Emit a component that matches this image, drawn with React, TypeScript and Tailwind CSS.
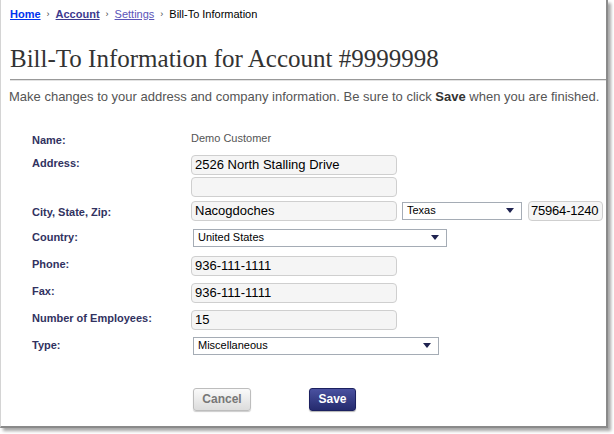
import React from "react";

const labelCls = "w-[159px] shrink-0 text-[11px] font-bold text-[#31325f]";
const fieldCls =
  "h-[20px] rounded-[4px] border border-[#cfcfcf] bg-[#f5f5f5] text-[13px] text-black outline-none";

function Field({ value, width = "w-[206px] px-[3px]" }: { value: string; width?: string }) {
  return <input className={`${fieldCls} ${width}`} defaultValue={value} />;
}

function Caret() {
  return (
    <svg width="8" height="5" viewBox="0 0 8 5" className="shrink-0">
      <path d="M0 0 H8 L4 5 Z" fill="#1f2350" />
    </svg>
  );
}

function FakeSelect({ value, width }: { value: string; width: string }) {
  return (
    <div
      className={`flex h-[18px] ${width} items-center justify-between border border-[#a5acb5] bg-white pl-[4px] pr-[7px] text-[11px] text-black`}
    >
      <span>{value}</span>
      <Caret />
    </div>
  );
}

function Row({ label, children, className = "" }: { label: string; children: React.ReactNode; className?: string }) {
  return (
    <div className={`flex items-start ${className}`}>
      <div className={labelCls}>{label}</div>
      <div className="flex flex-col gap-[2px]">{children}</div>
    </div>
  );
}

export default function App() {
  return (
    <div className="h-[434px] w-[614px] bg-white" style={{ fontFamily: '"Liberation Sans", Arial, sans-serif' }}>
      <div className="h-[428px] w-[608px] border-b-2 border-l border-r-2 border-b-[#8a8a8a] border-l-[#d4d4d4] border-r-[#8a8a8a] bg-white shadow-[3px_3px_3px_rgba(0,0,0,0.35)]">
        {/* breadcrumb */}
        <div className="flex items-center gap-[6px] pl-[9px] pt-[8px] text-[11px] leading-[13px]">
          <a className="font-bold text-[#0033ee] underline">Home</a>
          <span className="text-[9px] text-[#444]">›</span>
          <a className="font-bold text-[#3d3a8e] underline">Account</a>
          <span className="text-[9px] text-[#444]">›</span>
          <a className="text-[#5a54b8] underline">Settings</a>
          <span className="text-[9px] text-[#444]">›</span>
          <span className="text-black">Bill-To Information</span>
        </div>

        <h1
          className="ml-[9px] mt-[22px] text-[25px] leading-[32px] text-[#333]"
          style={{ fontFamily: '"Liberation Serif", "Times New Roman", serif' }}
        >
          Bill-To Information for Account #9999998
        </h1>
        <div className="ml-[9px] mt-[4px] h-[2px] border-t border-[#999] bg-[#e2e2e2]" />

        <p className="ml-[8px] mt-[8px] whitespace-nowrap text-[13px] leading-[15px] text-[#555]">
          Make changes to your address and company information. Be sure to click{" "}
          <b className="text-[#333]">Save</b> when you are finished.
        </p>

        <div className="ml-[31px] mt-[28px] flex flex-col">
          <Row label="Name:">
            <span className="text-[11px] leading-[13px] text-[#555]">Demo Customer</span>
          </Row>

          <Row label="Address:" className="mt-[6px]">
            <Field value="2526 North Stalling Drive" />
            <Field value="" />
          </Row>

          <div className="mt-[4px] flex items-start">
            <div className={`${labelCls} pt-[3px]`}>City, State, Zip:</div>
            <div className="flex items-center">
              <Field value="Nacogdoches" />
              <div className="ml-[5px]">
                <FakeSelect value="Texas" width="w-[120px]" />
              </div>
              <Field value="75964-1240" width="ml-[6px] w-[75px] px-[2px] tracking-[-0.2px]" />
            </div>
          </div>

          <div className="mt-[8px] flex items-start">
            <div className={labelCls}>Country:</div>
            <div className="ml-[2px]">
              <FakeSelect value="United States" width="w-[254px]" />
            </div>
          </div>

          <Row label="Phone:" className="mt-[9px]">
            <Field value="936-111-1111" />
          </Row>
          <Row label="Fax:" className="mt-[7px]">
            <Field value="936-111-1111" />
          </Row>
          <Row label="Number of Employees:" className="mt-[7px]">
            <Field value="15" />
          </Row>

          <div className="mt-[7px] flex items-start">
            <div className={labelCls}>Type:</div>
            <div className="ml-[2px]">
              <FakeSelect value="Miscellaneous" width="w-[246px]" />
            </div>
          </div>

          <div className="ml-[161px] mt-[33px] flex items-center gap-[58px]">
            <button className="h-[23px] w-[58px] rounded-[3px] border border-[#bdbdbd] bg-gradient-to-b from-[#fafafa] to-[#dcdcdc] text-[12px] font-bold text-[#777] shadow-[0_1px_1px_rgba(0,0,0,0.2)]">
              Cancel
            </button>
            <button className="h-[23px] w-[47px] rounded-[3px] border border-[#1c2160] bg-gradient-to-b from-[#4a51a0] to-[#252b6e] text-[12px] font-bold text-white shadow-[0_1px_1px_rgba(0,0,0,0.3)]">
              Save
            </button>
          </div>
        </div>
      </div>
    </div>
  );
}
